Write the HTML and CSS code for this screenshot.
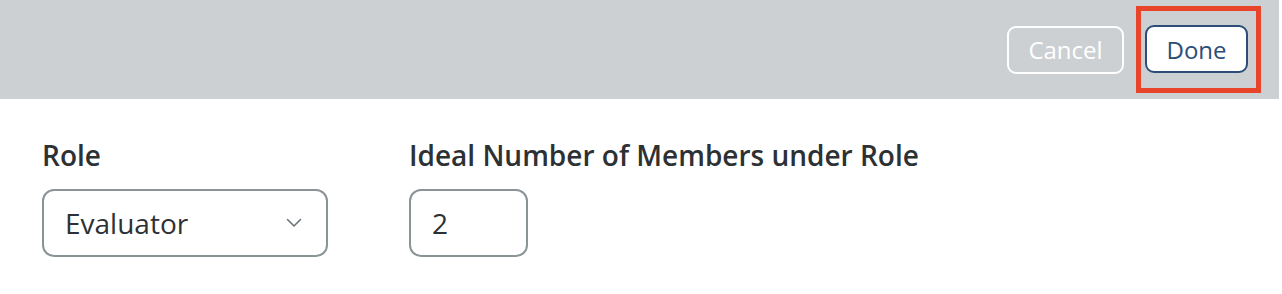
FILE: index.html
```html
<!DOCTYPE html>
<html>
<head>
<meta charset="utf-8">
<link rel="stylesheet" href="styles.css">
</head>
<body>
<div class="page">
  <header class="toolbar">
    <button class="btn btn-cancel">Cancel</button>
    <div class="highlight">
      <button class="btn btn-done">Done</button>
    </div>
  </header>
  <main class="form">
    <div class="field">
      <label class="label">Role</label>
      <div class="select">
        <span>Evaluator</span>
        <svg class="chevron" width="16" height="10" viewBox="0 0 16 10"><path d="M1.5 1.5 L8 8 L14.5 1.5" fill="none" stroke="#6b7377" stroke-width="1.6" stroke-linecap="round" stroke-linejoin="round"/></svg>
      </div>
    </div>
    <div class="field">
      <label class="label">Ideal Number of Members under Role</label>
      <div class="number">2</div>
    </div>
  </main>
</div>
</body>
</html>
```
FILE: styles.css
```css
html, body {
  margin: 0;
  padding: 0;
  background: #ffffff;
}
body {
  font-family: "Open Sans", "Liberation Sans", sans-serif;
  color: #2d3134;
}
.page {
  width: 1279px;
}
.toolbar {
  height: 99px;
  background: #ccd0d3;
  display: flex;
  align-items: center;
  justify-content: flex-end;
  padding-right: 18px;
  box-sizing: border-box;
}
.btn {
  font-family: "Open Sans", "Liberation Sans", sans-serif;
  font-size: 24px;
  height: 48px;
  border-radius: 9px;
  border: 2px solid;
  box-sizing: border-box;
  padding: 0;
  cursor: pointer;
}
.btn-cancel {
  background: transparent;
  border-color: #ffffff;
  color: #ffffff;
  width: 117px;
  margin-right: 12px;
}
.highlight {
  border: 5px solid #e8442a;
  padding: 14px 8px 15px 4px;
}
.btn-done {
  background: #ffffff;
  border-color: #2b4d78;
  color: #2b4d78;
  width: 103px;
  display: block;
}
.form {
  display: flex;
  gap: 81px;
  padding: 37px 0 0 42px;
}
.field {
  display: flex;
  flex-direction: column;
}
.label {
  font-size: 28px;
  font-weight: 600;
  line-height: 38px;
  margin-bottom: 15px;
}
.select {
  width: 286px;
  height: 68px;
  box-sizing: border-box;
  border: 2px solid #8a9396;
  border-radius: 12px;
  display: flex;
  align-items: center;
  justify-content: space-between;
  padding: 0 24px 0 21px;
  font-size: 28px;
}
.number {
  width: 119px;
  height: 68px;
  box-sizing: border-box;
  border: 2px solid #8a9396;
  border-radius: 12px;
  display: flex;
  align-items: center;
  padding: 0 21px;
  font-size: 28px;
}
```
